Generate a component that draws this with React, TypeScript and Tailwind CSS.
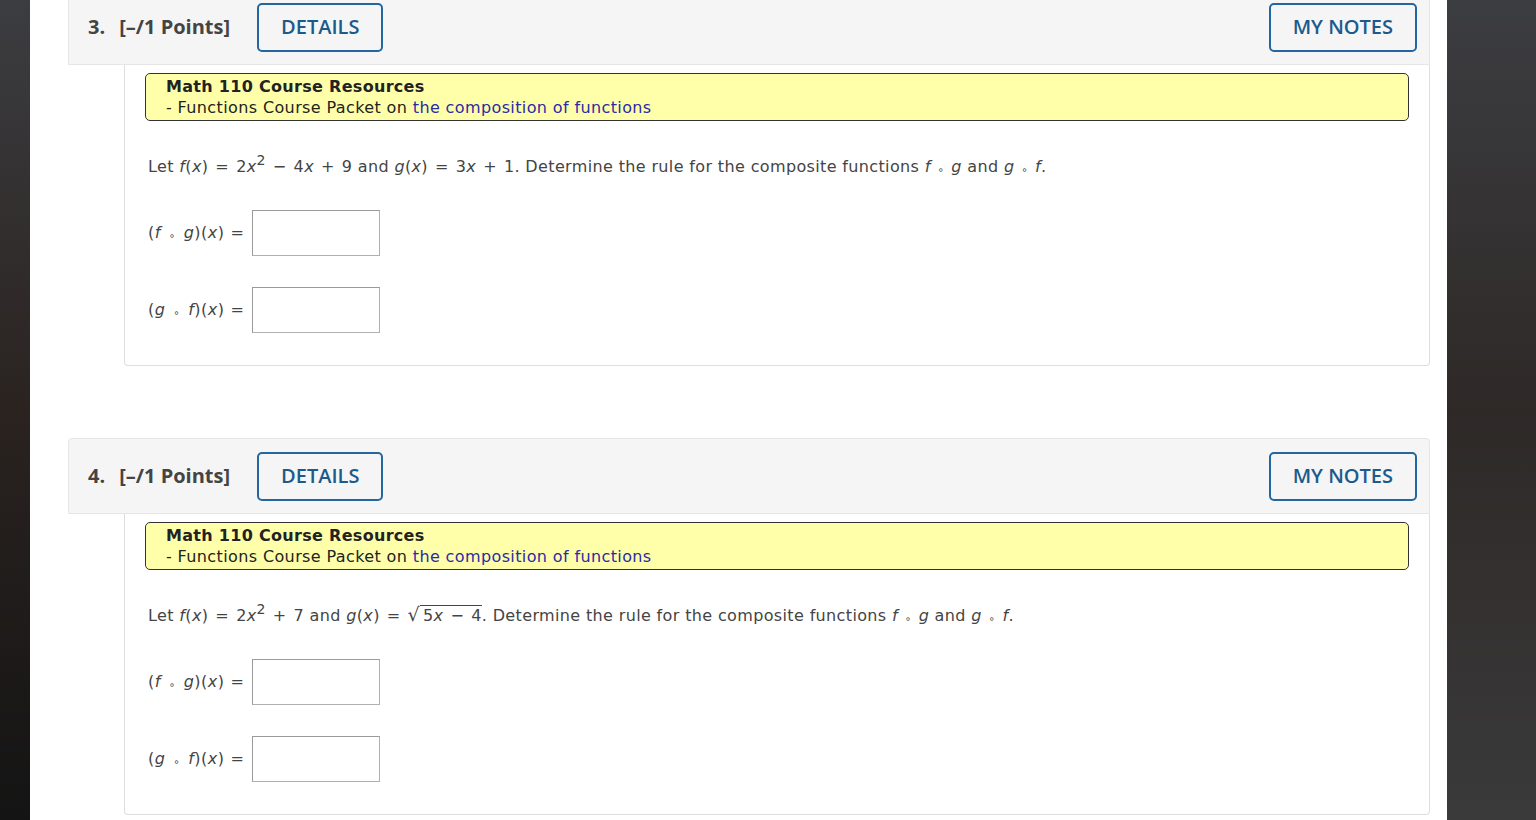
import React from "react";

const verdana = { fontFamily: '"DejaVu Sans", Verdana, sans-serif' };

const I = ({ children }: { children: React.ReactNode }) => <i className="italic">{children}</i>;
const Ring = () => <span className="mx-[7px] text-[10px] leading-none align-[-1px]">∘</span>;
const Eq = () => <span className="mx-[7px]">=</span>;
const Op = ({ c }: { c: string }) => <span className="mx-[7px]">{c}</span>;

const AnswerRow = ({ first, second, top }: { first: string; second: string; top: string }) => (
  <div className={`flex items-center ${top}`}>
    <span className="pl-[3px] text-[16px] tracking-[0.5px] text-[#444]">
      (<I>{first}</I>
      <span className="mx-[8px] text-[10px] align-[-1px]">∘</span>
      <I>{second}</I>)(<I>x</I>)<span className="ml-[6px]">=</span>
    </span>
    <div className="ml-[8px] h-[46px] w-[128px] border border-[#b0b0b0] border-t-[#9a9a9a] border-l-[#9a9a9a] bg-white" />
  </div>
);

const Question = ({
  num,
  statement,
  first,
}: {
  num: string;
  statement: React.ReactNode;
  first?: boolean;
}) => (
  <div className={first ? "-mt-[11px]" : "mt-[72px]"}>
    <div className="flex h-[76px] items-center rounded-t border border-[#e6e6e6] bg-[#f5f5f5] pl-[19px] pr-[12px]" style={{ fontFamily: '"Open Sans", sans-serif' }}>
      <span className="text-[20px] font-bold text-[#444]">{num}.</span>
      <span className="ml-[14px] text-[20px] font-bold text-[#444]">[–/1 Points]</span>
      <button className="ml-[27px] h-[49px] rounded-[5px] border-2 border-[#23679e] px-[22px] text-[20px] font-semibold text-[#1c5a8c]">DETAILS</button>
      <button className="ml-auto h-[49px] rounded-[5px] border-2 border-[#23679e] px-[22px] text-[20px] font-semibold text-[#1c5a8c]">MY NOTES</button>
    </div>
    <div className="ml-[56px] rounded-b border border-t-0 border-[#dedede] px-5 pt-2 pb-[32px]" style={verdana}>
      <div className="rounded-[5px] border border-[#333] bg-[#ffffaa] py-[2px] pl-5 text-[16px] leading-[21px] tracking-[0.38px] text-[#222]">
        <div className="font-bold tracking-[0.3px]">Math 110 Course Resources</div>
        <div>
          - Functions Course Packet on <span className="text-[#2b2ba6]">the composition of functions</span>
        </div>
      </div>
      <div className="mt-[34px] h-[24px] pl-[3px] text-[16px] leading-[24px] tracking-[0.36px] text-[#444]">{statement}</div>
      <AnswerRow first="f" second="g" top="mt-[31px]" />
      <AnswerRow first="g" second="f" top="mt-[31px]" />
    </div>
  </div>
);

const Tail = () => (
  <>
    . Determine the rule for the composite functions <I>f</I>
    <Ring />
    <I>g</I> and <I>g</I>
    <Ring />
    <I>f</I>.
  </>
);

export default function App() {
  return (
    <div className="flex h-[820px] overflow-hidden">
      <div className="w-[30px] shrink-0 bg-linear-to-b from-[#3c3d41] via-[#2a2320] to-[#141414]" />
      <div className="flex-1 bg-white pl-[38px] pr-[17px]">
        <Question
          num="3"
          first
          statement={
            <>
              Let <I>f</I>(<I>x</I>)<Eq />2<I>x</I>
              <sup className="text-[14px] leading-none">2</sup>
              <Op c="−" />4<I>x</I>
              <Op c="+" />9 and <I>g</I>(<I>x</I>)<Eq />3<I>x</I>
              <Op c="+" />1<Tail />
            </>
          }
        />
        <Question
          num="4"
          statement={
            <>
              Let <I>f</I>(<I>x</I>)<Eq />2<I>x</I>
              <sup className="text-[14px] leading-none">2</sup>
              <Op c="+" />7 and <I>g</I>(<I>x</I>)<Eq />
              <span className="text-[19px] leading-none">√</span>
              <span className="border-t border-[#444] pl-[3px]">
                5<I>x</I>
                <Op c="−" />4
              </span>
              <Tail />
            </>
          }
        />
      </div>
      <div className="w-[89px] shrink-0 bg-linear-to-b from-[#3c3d41] via-[#2e2927] to-[#3a3a3b]" />
    </div>
  );
}
